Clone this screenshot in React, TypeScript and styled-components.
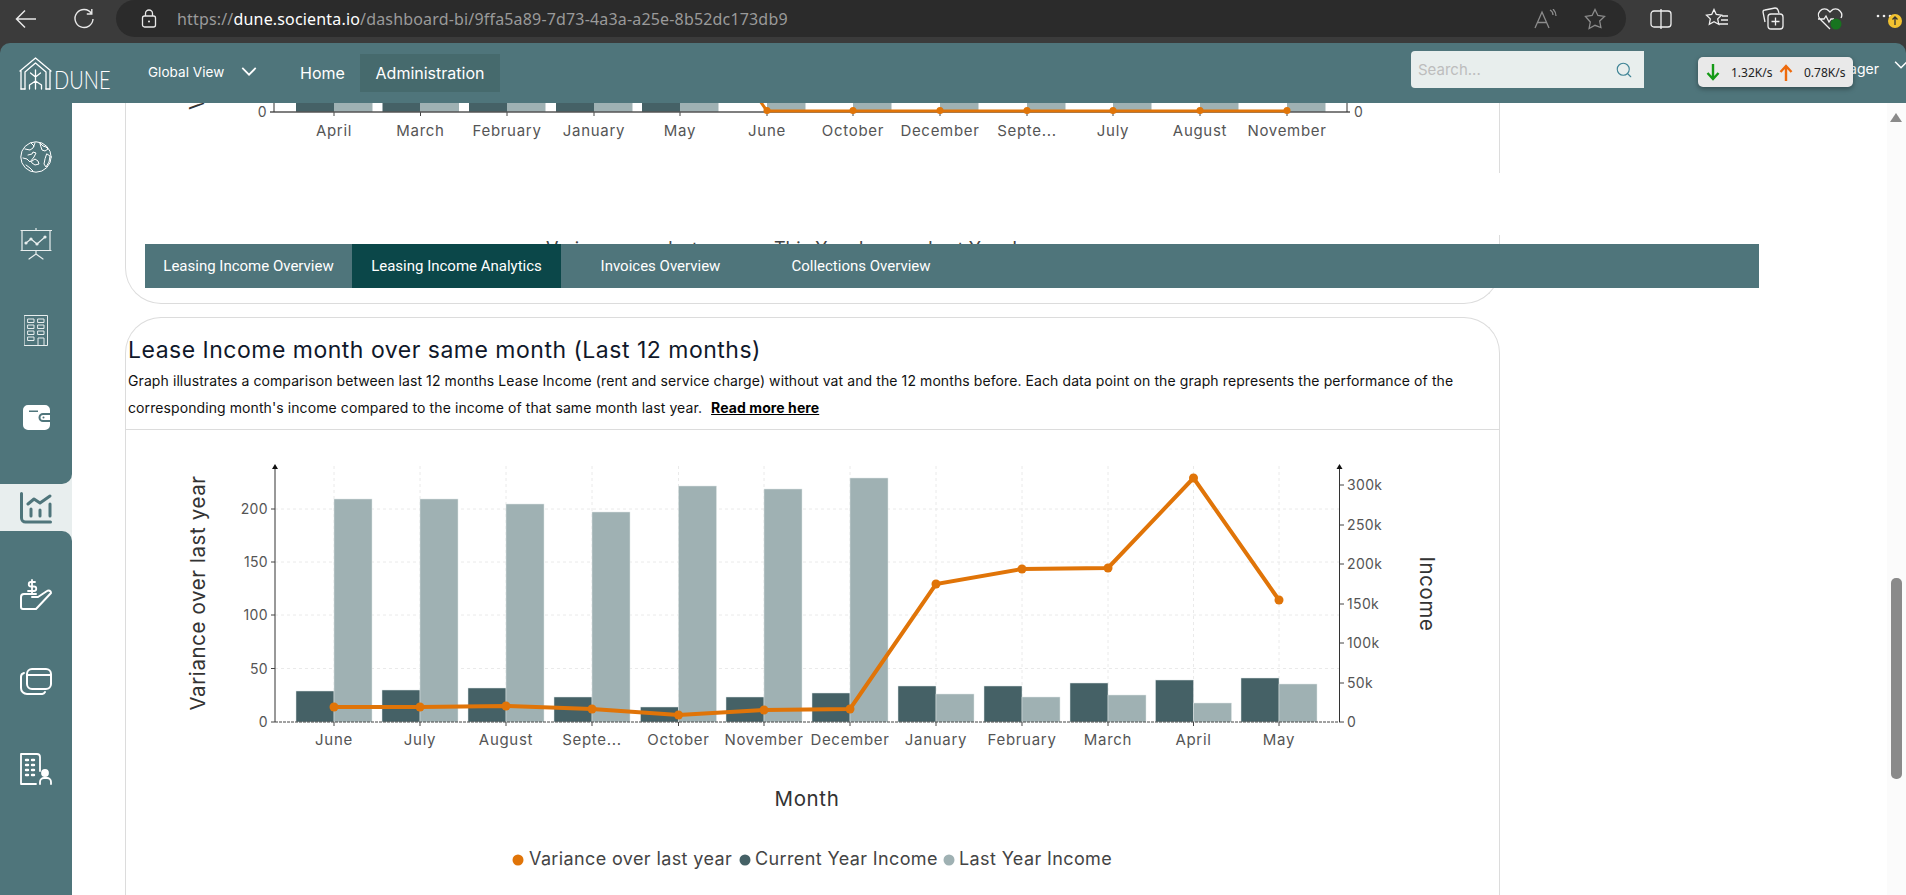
import React from "react";
import styled, { createGlobalStyle } from "styled-components";
import { Search } from "lucide-react";

const Global = createGlobalStyle`
  html, body { margin: 0; padding: 0; height: 100%; overflow: hidden; background: #3b3b3b; }
  #root { height: 100%; }
  * { box-sizing: border-box; }
`;
const sans = `Inter, "Noto Sans", "Liberation Sans", sans-serif`;

const Page = styled.div`
  width: 1906px; height: 895px; display: flex; flex-direction: column; background: #3b3b3b; overflow: hidden; font-family: ${sans};
`;
const BrowserBar = styled.div`
  height: 43px; flex: none; display: flex; align-items: flex-start; position: relative;
`;
const NavButton = styled.div<{ $w: number }>`
  width: ${(p) => p.$w}px; height: 37px; flex: none; display: flex; align-items: center; justify-content: center; color: #e8e8e8;
`;
const AddressPill = styled.div`
  width: 1510px; height: 37px; flex: none; background: #2b2b2b; border-radius: 19px; display: flex; align-items: center; padding-left: 25px;
`;
const Url = styled.span`
  font-family: "Noto Sans", sans-serif; font-size: 16px; color: #9a9a9a; margin-left: 20px; white-space: nowrap; letter-spacing: 0.17px;
  b { color: #fff; font-weight: 400; }
`;
const PillEnd = styled.div`
  margin-left: auto; display: flex; gap: 26px; padding-right: 20px; align-items: center;
`;
const Tools = styled.div`
  display: flex; margin-left: 24px; gap: 33px; align-items: center; height: 37px;
`;
const Shell = styled.div`
  flex: 1; min-height: 0; display: flex; flex-direction: column; background: #4f757b; border-radius: 10px 10px 0 0;
`;
const Header = styled.header`
  height: 60px; flex: none; display: flex; align-items: flex-start; position: relative; color: #fff;
`;
const Logo = styled.div`
  width: 148px; flex: none; display: flex; align-items: flex-start; padding: 14px 0 0 19px;
`;
const LogoWord = styled.span`
  font-family: Lato, sans-serif; font-weight: 300; font-size: 26px; line-height: 24px; margin: 10px 0 0 2px; display: inline-block; transform: scaleX(0.77); transform-origin: left;
`;
const ViewPicker = styled.div`
  width: 152px; flex: none; height: 60px; display: flex; align-items: center; font-size: 13.5px; padding-bottom: 2px; gap: 17px; letter-spacing: 0.05px;
`;
const NavItem = styled.div<{ $active?: boolean }>`
  height: 38px; margin-top: 11px; display: flex; align-items: center; font-size: 16px; flex: none;
  justify-content: ${(p) => (p.$active ? "center" : "flex-start")};
  width: ${(p) => (p.$active ? "140px" : "60px")};
  background: ${(p) => (p.$active ? "#466a6d" : "transparent")};
`;
const SearchBox = styled.div`
  position: absolute; left: 1411px; top: 8px; width: 233px; height: 37px; background: #e8eeed; border-radius: 4px 0 0 4px; display: flex; align-items: center; justify-content: space-between; padding: 0 11px 0 7px; font-size: 15px; color: #bdbdbd;
`;
const UserName = styled.div`
  position: absolute; right: 27px; top: 16px; font-size: 14px; color: #fff; line-height: 20px;
`;
const UserChevron = styled.div`
  position: absolute; right: -2px; top: 18px; color: #fff;
`;
const SpeedPopup = styled.div`
  position: absolute; left: 1698px; top: 14px; width: 155px; height: 30px; background: #e9e9e9; border-radius: 5px; box-shadow: 0 2px 5px rgba(0,0,0,.35); display: flex; align-items: center; padding-left: 8px; color: #222; font-family: "Noto Sans", sans-serif; font-size: 12px;
`;
const SpeedValue = styled.span`
  margin: 0 5px 0 11px; white-space: nowrap; width: 43px;
`;
const Body = styled.div`
  flex: 1; min-height: 0; display: flex;
`;
const Sidebar = styled.nav`
  width: 72px; flex: none; display: flex; flex-direction: column; background: #e8eeee;
`;
const SideTop = styled.div`
  height: 381px; flex: none; background: #4f757b; border-radius: 0 0 10px 0; padding-top: 10px;
`;
const SideActive = styled.div`
  height: 47px; flex: none; display: flex; align-items: center; justify-content: center;
`;
const SideBottom = styled.div`
  flex: 1; background: #4f757b; border-radius: 0 10px 0 0; padding-top: 20px;
`;
const SideItem = styled.div`
  height: 87px; display: flex; align-items: center; justify-content: center;
`;
const Main = styled.main`
  flex: 1; min-width: 0; position: relative; background: #fff; overflow: hidden;
`;
const TopCard = styled.section`
  width: 1375px; height: 201px; margin: 0 0 13px 53px; border: 1px solid #dcdcdc; border-top: none; border-radius: 0 0 36px 36px; position: relative; overflow: hidden;
`;
const Svg = styled.svg`
  display: block;
`;
const BorderMask = styled.div`
  position: absolute; left: 1425px; top: 70px; width: 4px; height: 62px; background: #fff;
`;
const LegendPeek = styled.div`
  height: 6px; position: absolute; top: 135px; left: 0; right: 0; overflow: hidden; font-size: 18px; line-height: 22px; color: #444; white-space: nowrap;
`;
const PeekItem = styled.span<{ $x: number }>`
  position: absolute; top: 0; left: ${(p) => p.$x}px;
`;
const Card = styled.section`
  width: 1375px; margin-left: 53px; height: 700px; border: 1px solid #dcdcdc; border-bottom: none; border-radius: 36px 36px 0 0;
`;
const CardHead = styled.div`
  height: 112px; padding: 16px 0 0 2px; border-bottom: 1px solid #dcdcdc;
`;
const Title = styled.h2`
  margin: 0; font-size: 23px; font-weight: 400; line-height: 33px; color: #10182a; white-space: nowrap; letter-spacing: 0.5px;
`;
const Description = styled.p`
  margin: 0; font-size: 14px; line-height: 27px; color: #111; white-space: nowrap; letter-spacing: 0.09px;
`;
const ReadMore = styled.a`
  color: #000; font-weight: 700; text-decoration: underline; margin-left: 5px;
`;
const TabBar = styled.div`
  position: absolute; left: 73px; top: 141px; width: 1614px; height: 44px; background: #4f757b; display: flex;
`;
const Tab = styled.div<{ $w: number; $active?: boolean }>`
  width: ${(p) => p.$w}px; flex: none; display: flex; align-items: center; justify-content: center; color: #fff; font-family: Roboto, sans-serif; font-weight: 400; font-size: 15px;
  background: ${(p) => (p.$active ? "#0b4749" : "transparent")};
`;
const ScrollTrack = styled.div`
  width: 19px; flex: none; background: #fbfbfb; position: relative;
`;
const ScrollArrow = styled.div`
  position: absolute; left: 3px; top: 10px; width: 0; height: 0; border-left: 6.5px solid transparent; border-right: 6.5px solid transparent; border-bottom: 9px solid #8a8a8a;
`;
const ScrollThumb = styled.div`
  position: absolute; left: 4px; top: 475px; width: 11px; height: 201px; background: #8a8a8a; border-radius: 5px;
`;
const TickText = styled.text`
  font-family: ${sans}; font-size: 14px; fill: #555; letter-spacing: 0.35px;
`;
const MonthText = styled.text`
  font-family: ${sans}; font-size: 15px; fill: #555; letter-spacing: 0.7px;
`;
const TitleText = styled.text`
  font-family: ${sans}; font-size: 20.5px; fill: #333; letter-spacing: 0.6px;
`;
const LegendText = styled.text`
  font-family: ${sans}; font-size: 18px; fill: #444; letter-spacing: 0.38px;
`;

const DARK = "#456166";
const LIGHT = "#9fb1b3";
const ORANGE = "#e07408";

const mainData = [
  ["June", 334, 691, 499, 707], ["July", 420, 690, 499, 707], ["August", 506, 688, 504, 706],
  ["Septe...", 592, 697, 512, 709], ["October", 678.5, 707, 486, 715], ["November", 764, 697, 489, 710],
  ["December", 850, 693, 478, 709], ["January", 936, 686, 694, 584], ["February", 1022, 686, 697, 569],
  ["March", 1108, 683, 695, 568], ["April", 1193.5, 680, 703, 478], ["May", 1279, 678, 684, 600],
] as const;
const ZERO = 722;

function MainChart() {
  const leftTicks: [string, number][] = [["200", 509], ["150", 562], ["100", 615], ["50", 668.5], ["0", 722]];
  const rightTicks: [string, number][] = [["300k", 485], ["250k", 525], ["200k", 564], ["150k", 604], ["100k", 643], ["50k", 683], ["0", 722]];
  return (
    <Svg width={1373} height={464} viewBox="126 430 1373 464">
      {leftTicks.slice(0, 4).map(([, y]) => (
        <line key={y} x1={275} x2={1340} y1={y} y2={y} stroke="#eaeaea" strokeDasharray="3 3" />
      ))}
      {mainData.map(([m, x]) => (
        <line key={m} x1={x} x2={x} y1={466} y2={ZERO} stroke="#eaeaea" strokeDasharray="3 3" />
      ))}
      {mainData.map(([m, x, dark, light]) => (
        <g key={m}>
          <rect x={x - 38} y={dark} width={38} height={ZERO - dark} fill={DARK} stroke="#dfe6e6" strokeWidth={0.5} />
          <rect x={x} y={light} width={38} height={ZERO - light} fill={LIGHT} stroke="#dfe6e6" strokeWidth={0.5} />
          <line x1={x} x2={x} y1={ZERO} y2={ZERO + 4} stroke="#444" />
          <MonthText x={x} y={745} textAnchor="middle">{m}</MonthText>
        </g>
      ))}
      <line x1={275} x2={1340} y1={ZERO} y2={ZERO} stroke="#444" strokeDasharray="3 1" />
      <line x1={275} x2={275} y1={468} y2={ZERO} stroke="#333" />
      <path d="M275 464l-3 5h6z" fill="#111" />
      <line x1={1339.5} x2={1339.5} y1={468} y2={ZERO} stroke="#333" />
      <path d="M1339.5 464l-3 5h6z" fill="#111" />
      {leftTicks.map(([t, y]) => (
        <g key={t}>
          <line x1={271} x2={275} y1={y} y2={y} stroke="#444" />
          <TickText x={268} y={y + 5} textAnchor="end">{t}</TickText>
        </g>
      ))}
      {rightTicks.map(([t, y]) => (
        <g key={t}>
          <line x1={1340} x2={1344} y1={y} y2={y} stroke="#444" />
          <TickText x={1347} y={y + 5}>{t}</TickText>
        </g>
      ))}
      <polyline points={mainData.map((d) => `${d[1]},${d[4]}`).join(" ")} fill="none" stroke={ORANGE} strokeWidth={4} />
      {mainData.map(([m, x, , , y]) => (
        <circle key={m} cx={x} cy={y} r={4.5} fill={ORANGE} />
      ))}
      <TitleText transform="translate(205 593) rotate(-90)" textAnchor="middle">Variance over last year</TitleText>
      <TitleText transform="translate(1420 594) rotate(90)" textAnchor="middle">Income</TitleText>
      <TitleText x={807} y={806} textAnchor="middle">Month</TitleText>
      <circle cx={518} cy={860} r={5.5} fill={ORANGE} />
      <LegendText x={529} y={865}>Variance over last year</LegendText>
      <circle cx={745} cy={860} r={5.5} fill={DARK} />
      <LegendText x={755} y={865}>Current Year Income</LegendText>
      <circle cx={949} cy={860} r={5.5} fill={LIGHT} />
      <LegendText x={959} y={865}>Last Year Income</LegendText>
    </Svg>
  );
}

const miniData: [string, number, boolean][] = [
  ["April", 334, true], ["March", 420.5, true], ["February", 507, true], ["January", 594, true], ["May", 680, true],
  ["June", 767, false], ["October", 853, false], ["December", 940, false], ["Septe...", 1027, false],
  ["July", 1113, false], ["August", 1200, false], ["November", 1287, false],
];

function MiniChart() {
  return (
    <Svg width={1373} height={70} viewBox="126 103 1373 70">
      {miniData.map(([m, x, hasDark]) => (
        <g key={m}>
          {hasDark && <rect x={x - 38} y={100} width={38} height={12} fill={DARK} />}
          <rect x={x} y={100} width={38.5} height={12} fill={LIGHT} />
          <line x1={x} x2={x} y1={112} y2={116} stroke="#444" />
          <MonthText x={x} y={136} textAnchor="middle">{m}</MonthText>
        </g>
      ))}
      <line x1={270} x2={1350} y1={112} y2={112} stroke="#555" strokeWidth={1.4} />
      <line x1={274} x2={274} y1={100} y2={112} stroke="#333" />
      <line x1={1347} x2={1347} y1={100} y2={112} stroke="#333" />
      <TickText x={267} y={117} textAnchor="end">0</TickText>
      <TickText x={1354} y={117}>0</TickText>
      <polyline points="758,98 767,111 1287,111" fill="none" stroke={ORANGE} strokeWidth={3} />
      {miniData.slice(5).map(([m, x]) => (
        <circle key={m} cx={x} cy={110.5} r={3.5} fill={ORANGE} />
      ))}
      <TitleText transform="translate(204 110) rotate(-90)">Variance over last year</TitleText>
    </Svg>
  );
}

const line = { fill: "none", stroke: "currentColor", strokeLinecap: "round", strokeLinejoin: "round" } as const;

const IconGlobe = () => (
  <Svg width={32} height={32} viewBox="0 0 32 32" color="#fff" {...line} strokeWidth={1}>
    <circle cx="16" cy="16" r="15.2" />
    <path d="M5 8l5 1 3-2 2-5M3 17l4 1 3 3 4-5 2-4-3-1-1 2-4 1M11 2l3 3" />
    <path d="M20 2l3 3 3 1 2 2-3 2-3-1-1-3zM27 13l3 2-1 6-3 5-2-3 1-5z" />
    <path d="M12 20l3-2 3 2 1 3-4 1-3-2zM6 24l4 3 3 3" />
  </Svg>
);
const IconBoard = () => (
  <Svg width={32} height={32} viewBox="0 0 32 32" color="#e8eeee" {...line} strokeWidth={1.2}>
    <path d="M1 2.500h31M16 0v2.500M2 2.500v20h28v-20M1 22.500h30M16 23v3M9 31l7-5 7 5" />
    <path d="M6 15l5-4 6 5 8-7" />
    <circle cx="6" cy="15" r="1" fill="#fff" /><circle cx="11" cy="11" r="1" fill="#fff" />
    <circle cx="17" cy="16" r="1" fill="#fff" /><circle cx="25" cy="9" r="1" fill="#fff" />
  </Svg>
);
const IconBuilding = () => (
  <Svg width={24} height={31} viewBox="0 0 24 31" color="#e8eeee" {...line} strokeWidth={1}>
    <rect x="0.500" y="0.500" width="23" height="30" />
    {[4, 10, 16, 22].map((y) => (
      <rect key={y} x="4" y={y} width="6" height="3.500" />
    ))}
    {[4, 10, 16].map((y) => (
      <rect key={y} x="14" y={y} width="6" height="3.500" />
    ))}
    <path d="M14 30v-7h6v7" />
  </Svg>
);
const IconWallet = () => (
  <Svg width={27} height={25} viewBox="0 0 27 25">
    <path fillRule="evenodd" fill="#fff" d="M5 0h17a5 5 0 0 1 5 5v3h-7a4.500 4.500 0 0 0 0 9h7v3a5 5 0 0 1-5 5H5a5 5 0 0 1-5-5V5a5 5 0 0 1 5-5zM6 5.500v1.500h9V5.500z" />
    <path fillRule="evenodd" fill="#fff" d="M20 10h7v5h-7a2.500 2.500 0 0 1 0-5zm.5 1.500a1 1 0 1 0 0 2 1 1 0 0 0 0-2z" />
  </Svg>
);
const IconChart = () => (
  <Svg width={32} height={32} viewBox="0 0 32 32" color="#4f757b" {...line} strokeWidth={3}>
    <path d="M1.500 1.500V26a4 4 0 0 0 4 4h25" />
    <path d="M8 12l6-5 6 4 10-7" />
    <path d="M11 17v7M20 18v6M30 12v12" />
  </Svg>
);
const IconHand = () => (
  <Svg width={32} height={32} viewBox="0 0 32 32" color="#fff" {...line} strokeWidth={2}>
    <path d="M16 15H4a3 3 0 0 0-3 3v10a2 2 0 0 0 2 2h13l15-16a2.500 2.500 0 0 0-4-2l-9 6h-6" />
    <path d="M15 3h-4a2 2 0 0 0 0 4.500h3a2 2 0 0 1 0 4.500H8M12 1v13" strokeWidth={1.8} />
  </Svg>
);
const IconCards = () => (
  <Svg width={32} height={27} viewBox="0 0 32 27" color="#fff" {...line} strokeWidth={2}>
    <rect x="7" y="1" width="24" height="20" rx="5" />
    <path d="M7 7h24" />
    <path d="M4 5a4 4 0 0 0-3 4v11a6 6 0 0 0 6 6h14a4 4 0 0 0 4-2" />
  </Svg>
);
const IconTenant = () => (
  <Svg width={32} height={32} viewBox="0 0 32 32" color="#fff" {...line} strokeWidth={1.8}>
    <path d="M1 31V1h16a3 3 0 0 1 3 3v14M1 31h15" />
    <path strokeWidth={2.4} d="M6 7h2M12 7h2M6 12h2M12 12h2M6 17h2M12 17h2M6 22h2M12 22h2" />
    <circle cx="25" cy="20" r="3" fill="#fff" />
    <path d="M20 31v-2a4 4 0 0 1 4-4h3a4 4 0 0 1 4 4v2" />
  </Svg>
);
const LogoMark = () => (
  <Svg width={33} height={33} viewBox="0 0 33 33" color="#fff" {...line} strokeWidth={1.3}>
    <path d="M1 14L16.500 1 32 14M2 32V14M31 32V14M6 32V15L16.500 6 27 15v17" />
    <path d="M16.500 13v19M16.500 20l-5-4M16.500 24l-6 4v4M16.500 24l6 4v4M16.500 20l5-4M2 32h4M27 32h4" />
  </Svg>
);
const Chevron = ({ w = 16 }: { w?: number }) => (
  <Svg width={w} height={w * 0.6} viewBox="0 0 16 10" fill="none" stroke="currentColor" strokeWidth={1.8}>
    <path d="M1 1l7 7 7-7" />
  </Svg>
);
const SpeedArrowSvg = styled(Svg)<{ $up?: boolean }>`
  flex: none;
  transform: ${(p) => (p.$up ? "rotate(180deg)" : "none")};
`;
const SpeedArrow = ({ up, color }: { up?: boolean; color: string }) => (
  <SpeedArrowSvg $up={up} width={14} height={17} viewBox="0 0 14 17" fill="none" stroke={color} strokeWidth={2.4}>
    <path d="M7 0v15M1.500 9L7 15l5.500-6" />
  </SpeedArrowSvg>
);

export default function App() {
  return (
    <Page>
      <Global />
      <BrowserBar>
        <NavButton $w={51}>
          <Svg width={22} height={20} viewBox="0 0 22 20" fill="none" stroke="currentColor" strokeWidth={1.5}>
            <path d="M21 10H2M10 1.500L1.500 10l8.500 8.500" />
          </Svg>
        </NavButton>
        <NavButton $w={65}>
          <Svg width={22} height={22} viewBox="0 0 22 22" fill="none" stroke="currentColor" strokeWidth={1.4}>
            <path d="M18.500 5.500A9 9 0 1 0 20 11M18.800 1v5h-5" />
          </Svg>
        </NavButton>
        <AddressPill>
          <Svg width={16} height={19} viewBox="0 0 16 19" fill="none" stroke="#e8e8e8" strokeWidth={1.3}>
            <rect x="1.500" y="7" width="13" height="11" rx="2" />
            <path d="M4.500 7V4.500a3.500 3.500 0 0 1 7 0V7" />
            <circle cx="8" cy="12.500" r="1" fill="#e8e8e8" stroke="none" />
          </Svg>
          <Url>https://<b>dune.socienta.io</b>/dashboard-bi/9ffa5a89-7d73-4a3a-a25e-8b52dc173db9</Url>
          <PillEnd>
            <Svg width={24} height={20} viewBox="0 0 24 20" fill="none" stroke="#8c8c8c" strokeWidth={1.3}>
              <path d="M1 19L8 3l7 16M3.500 13.500h9M16 1c2 1 3 3 3 5M19 0c2 2 3 4 3 7" />
            </Svg>
            <Svg width={22} height={22} viewBox="0 0 22 22" fill="none" stroke="#8c8c8c" strokeWidth={1.3}>
              <path d="M11 1.500l2.900 6 6.600.9-4.800 4.600 1.200 6.500L11 17.300l-5.900 3.200 1.200-6.500L1.500 8.400l6.600-.9z" />
            </Svg>
          </PillEnd>
        </AddressPill>
        <Tools>
          <Svg width={22} height={20} viewBox="0 0 22 20" fill="none" stroke="#f0f0f0" strokeWidth={1.3}>
            <rect x="1" y="2" width="20" height="16" rx="3" />
            <path d="M11 0v20" />
          </Svg>
          <Svg width={24} height={22} viewBox="0 0 24 22" fill="none" stroke="#f0f0f0" strokeWidth={1.3}>
            <path d="M9 1.500l2.300 5 5.200.7-3.800 3.700 1 5.300L9 13.700l-4.700 2.500 1-5.300-3.800-3.700 5.200-.7zM17 8h6M16 12h7M14 16h9" />
          </Svg>
          <Svg width={22} height={24} viewBox="0 0 22 24" fill="none" stroke="#f0f0f0" strokeWidth={1.3}>
            <path d="M3 15L1 5a2 2 0 0 1 2-2l10-2a3 3 0 0 1 3 2l1 3" />
            <rect x="6" y="7" width="15" height="15" rx="3" />
            <path d="M13.500 10.500v8M9.500 14.500h8" />
          </Svg>
          <Svg width={26} height={24} viewBox="0 0 26 24" fill="none" stroke="#f0f0f0" strokeWidth={1.3}>
            <path d="M13 22L3 12a6 6 0 0 1 0-8 6 6 0 0 1 9 0l1 1 1-1a6 6 0 0 1 9 0 6 6 0 0 1 1 7M1 12h6l2-3 3 6 2-3h3" />
            <circle cx="19" cy="17" r="5.500" fill="#17741f" stroke="none" />
          </Svg>
          <Svg width={28} height={26} viewBox="0 0 28 26">
            <circle cx="2" cy="10" r="1.300" fill="#f0f0f0" /><circle cx="8" cy="10" r="1.300" fill="#f0f0f0" /><circle cx="14" cy="10" r="1.300" fill="#f0f0f0" />
            <circle cx="19" cy="15" r="7" fill="#f2c230" />
            <path d="M19 11v8M16.500 13.500L19 11l2.500 2.500" fill="none" stroke="#333" strokeWidth={1.3} />
          </Svg>
        </Tools>
      </BrowserBar>
      <Shell>
        <Header>
          <Logo>
            <LogoMark />
            <LogoWord>DUNE</LogoWord>
          </Logo>
          <ViewPicker>
            Global View
            <Chevron />
          </ViewPicker>
          <NavItem>Home</NavItem>
          <NavItem $active>Administration</NavItem>
          <SearchBox>
            Search...
            <Search size={18} color="#3f8496" strokeWidth={1.5} />
          </SearchBox>
          <UserName>Manager</UserName>
          <UserChevron><Chevron w={14} /></UserChevron>
          <SpeedPopup>
            <SpeedArrow color="#159a16" />
            <SpeedValue>1.32K/s</SpeedValue>
            <SpeedArrow up color="#ee6a0c" />
            <SpeedValue>0.78K/s</SpeedValue>
          </SpeedPopup>
        </Header>
        <Body>
          <Sidebar>
            <SideTop>
              <SideItem><IconGlobe /></SideItem>
              <SideItem><IconBoard /></SideItem>
              <SideItem><IconBuilding /></SideItem>
              <SideItem><IconWallet /></SideItem>
            </SideTop>
            <SideActive><IconChart /></SideActive>
            <SideBottom>
              <SideItem><IconHand /></SideItem>
              <SideItem><IconCards /></SideItem>
              <SideItem><IconTenant /></SideItem>
            </SideBottom>
          </Sidebar>
          <Main>
            <TopCard>
              <MiniChart />
              <LegendPeek>
                <PeekItem $x={420}>Variance over last year</PeekItem>
                <PeekItem $x={648}>This Year Income</PeekItem>
                <PeekItem $x={802}>Last Year Income</PeekItem>
              </LegendPeek>
            </TopCard>
            <BorderMask />
            <Card>
              <CardHead>
                <Title>Lease Income month over same month (Last 12 months)</Title>
                <Description>
                  Graph illustrates a comparison between last 12 months Lease Income (rent and service charge) without vat and the 12 months before. Each data point on the graph represents the performance of the
                  <br />
                  corresponding month's income compared to the income of that same month last year. <ReadMore href="#read">Read more here</ReadMore>
                </Description>
              </CardHead>
              <MainChart />
            </Card>
            <TabBar>
              <Tab $w={207}>Leasing Income Overview</Tab>
              <Tab $w={209} $active>Leasing Income Analytics</Tab>
              <Tab $w={199}>Invoices Overview</Tab>
              <Tab $w={202}>Collections Overview</Tab>
            </TabBar>
          </Main>
          <ScrollTrack>
            <ScrollArrow />
            <ScrollThumb />
          </ScrollTrack>
        </Body>
      </Shell>
    </Page>
  );
}
